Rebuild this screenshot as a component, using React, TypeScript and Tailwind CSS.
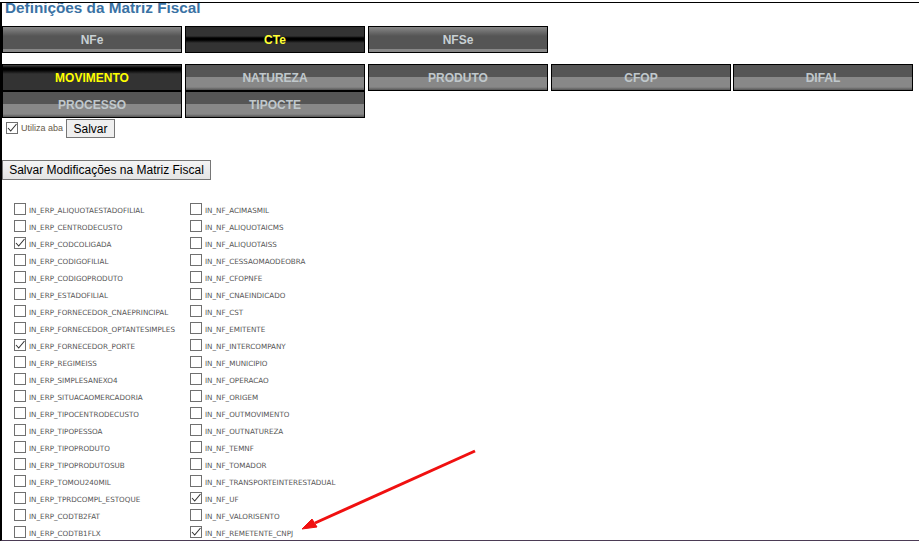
const erpFields = [
  ['IN_ERP_ALIQUOTAESTADOFILIAL', false],
  ['IN_ERP_CENTRODECUSTO', false],
  ['IN_ERP_CODCOLIGADA', true],
  ['IN_ERP_CODIGOFILIAL', false],
  ['IN_ERP_CODIGOPRODUTO', false],
  ['IN_ERP_ESTADOFILIAL', false],
  ['IN_ERP_FORNECEDOR_CNAEPRINCIPAL', false],
  ['IN_ERP_FORNECEDOR_OPTANTESIMPLES', false],
  ['IN_ERP_FORNECEDOR_PORTE', true],
  ['IN_ERP_REGIMEISS', false],
  ['IN_ERP_SIMPLESANEXO4', false],
  ['IN_ERP_SITUACAOMERCADORIA', false],
  ['IN_ERP_TIPOCENTRODECUSTO', false],
  ['IN_ERP_TIPOPESSOA', false],
  ['IN_ERP_TIPOPRODUTO', false],
  ['IN_ERP_TIPOPRODUTOSUB', false],
  ['IN_ERP_TOMOU240MIL', false],
  ['IN_ERP_TPRDCOMPL_ESTOQUE', false],
  ['IN_ERP_CODTB2FAT', false],
  ['IN_ERP_CODTB1FLX', false],
] as const;

const nfFields = [
  ['IN_NF_ACIMASMIL', false],
  ['IN_NF_ALIQUOTAICMS', false],
  ['IN_NF_ALIQUOTAISS', false],
  ['IN_NF_CESSAOMAODEOBRA', false],
  ['IN_NF_CFOPNFE', false],
  ['IN_NF_CNAEINDICADO', false],
  ['IN_NF_CST', false],
  ['IN_NF_EMITENTE', false],
  ['IN_NF_INTERCOMPANY', false],
  ['IN_NF_MUNICIPIO', false],
  ['IN_NF_OPERACAO', false],
  ['IN_NF_ORIGEM', false],
  ['IN_NF_OUTMOVIMENTO', false],
  ['IN_NF_OUTNATUREZA', false],
  ['IN_NF_TEMNF', false],
  ['IN_NF_TOMADOR', false],
  ['IN_NF_TRANSPORTEINTERESTADUAL', false],
  ['IN_NF_UF', true],
  ['IN_NF_VALORISENTO', false],
  ['IN_NF_REMETENTE_CNPJ', true],
] as const;

function Check({ checked, className = '' }: { checked: boolean; className?: string }) {
  return (
    <span className={`flex size-[12px] shrink-0 items-center justify-center border border-[#707070] bg-white ${className}`}>
      {checked && (
        <svg width="10" height="10" viewBox="0 0 10 10" fill="none">
          <path d="M1 5 3.7 8 9.5 1" stroke="#333" strokeWidth="1.1" />
        </svg>
      )}
    </span>
  );
}

function TopTab({ label, active }: { label: string; active?: boolean }) {
  return (
    <div
      className={
        active
          ? 'flex h-[27px] w-[180px] items-center justify-center border border-black bg-[linear-gradient(#333_0,#333_9px,#000_11px,#000_13px,#333_16px,#333_100%)] text-xs font-bold text-[#ffff33]'
          : 'flex h-[27px] w-[180px] items-center justify-center border border-black bg-[linear-gradient(#888_0,#555_9px,#555_22px,#888_22px,#888_100%)] text-xs font-bold text-[#c8d0d4]'
      }
    >
      {label}
    </div>
  );
}

function SubTab({ label, active, className = '' }: { label: string; active?: boolean; className?: string }) {
  return (
    <div
      className={
        active
          ? `flex h-[27px] w-[180px] items-center justify-center border border-black bg-[linear-gradient(#444_0,#000_3px,#000_5px,#333_9px,#333_100%)] text-xs font-bold text-[#ffff00] ${className}`
          : `flex h-[27px] w-[180px] items-center justify-center border border-black bg-[linear-gradient(#555_0,#555_12px,#888_12px,#888_22px,#555_100%)] text-xs font-bold text-[#c0c8cc] ${className}`
      }
    >
      {label}
    </div>
  );
}

function FieldColumn({ fields, width }: { fields: readonly (readonly [string, boolean])[]; width: string }) {
  return (
    <div className={`flex flex-col ${width}`}>
      {fields.map(([name, checked]) => (
        <label key={name} className="flex h-[17px] items-start gap-[3px] whitespace-nowrap text-[7.2px] leading-[17px] text-[#555]">
          <Check checked={checked} className="mt-[1px]" />
          {name}
        </label>
      ))}
    </div>
  );
}

export default function App() {
  return (
    <div className="relative h-[541px] w-[919px] overflow-hidden bg-white pt-[2px] font-['Liberation_Sans',sans-serif]">
      <div className="h-[539px] overflow-hidden border-t border-b border-l-2 border-t-black border-b-[#4b3b55] border-l-black">
        <h1 className="mt-[-6px] ml-[3px] text-[15.3px] leading-[22px] font-bold text-[#3a72a4]">
          Definições da Matriz Fiscal
        </h1>
        <div className="mt-[7px] flex gap-[3px]">
          <TopTab label="NFe" />
          <TopTab label="CTe" active />
          <TopTab label="NFSe" />
        </div>
        <div className="mt-[11px] flex gap-[3px]">
          <SubTab label="MOVIMENTO" active />
          <SubTab label="NATUREZA" />
          <SubTab label="PRODUTO" />
          <SubTab label="CFOP" />
          <SubTab label="DIFAL" className="ml-[-1px]" />
        </div>
        <div className="flex gap-[3px]">
          <SubTab label="PROCESSO" />
          <SubTab label="TIPOCTE" />
        </div>
        <div className="mt-[1px] ml-[4px] flex items-center gap-[1px]">
          <Check checked className="mt-[-2px]" />
          <span className="ml-[2px] text-[9px] text-[#665a4a]">Utiliza aba</span>
          <button className="ml-[2px] h-[19px] w-[49px] border border-[#767676] bg-[#efefef] text-xs text-black">
            Salvar
          </button>
        </div>
        <button className="mt-[22px] h-[20px] w-[209px] border border-[#767676] bg-[linear-gradient(#f4f4f4,#e4e4e4)] text-xs text-black">
          Salvar Modificações na Matriz Fiscal
        </button>
        <div className="mt-[21px] ml-[12px] flex font-['DejaVu_Sans',sans-serif]">
          <FieldColumn fields={erpFields} width="w-[176px]" />
          <FieldColumn fields={nfFields} width="w-[200px]" />
        </div>
      </div>
      <svg className="absolute top-[445px] left-[295px]" width="190" height="90" viewBox="295 445 190 90" fill="none">
        <path d="M475 451 315 523" stroke="#f01010" strokeWidth="3" />
        <path d="M302 529 312 519 317 527Z" fill="#f01010" stroke="#f01010" strokeWidth="1" />
      </svg>
    </div>
  );
}
